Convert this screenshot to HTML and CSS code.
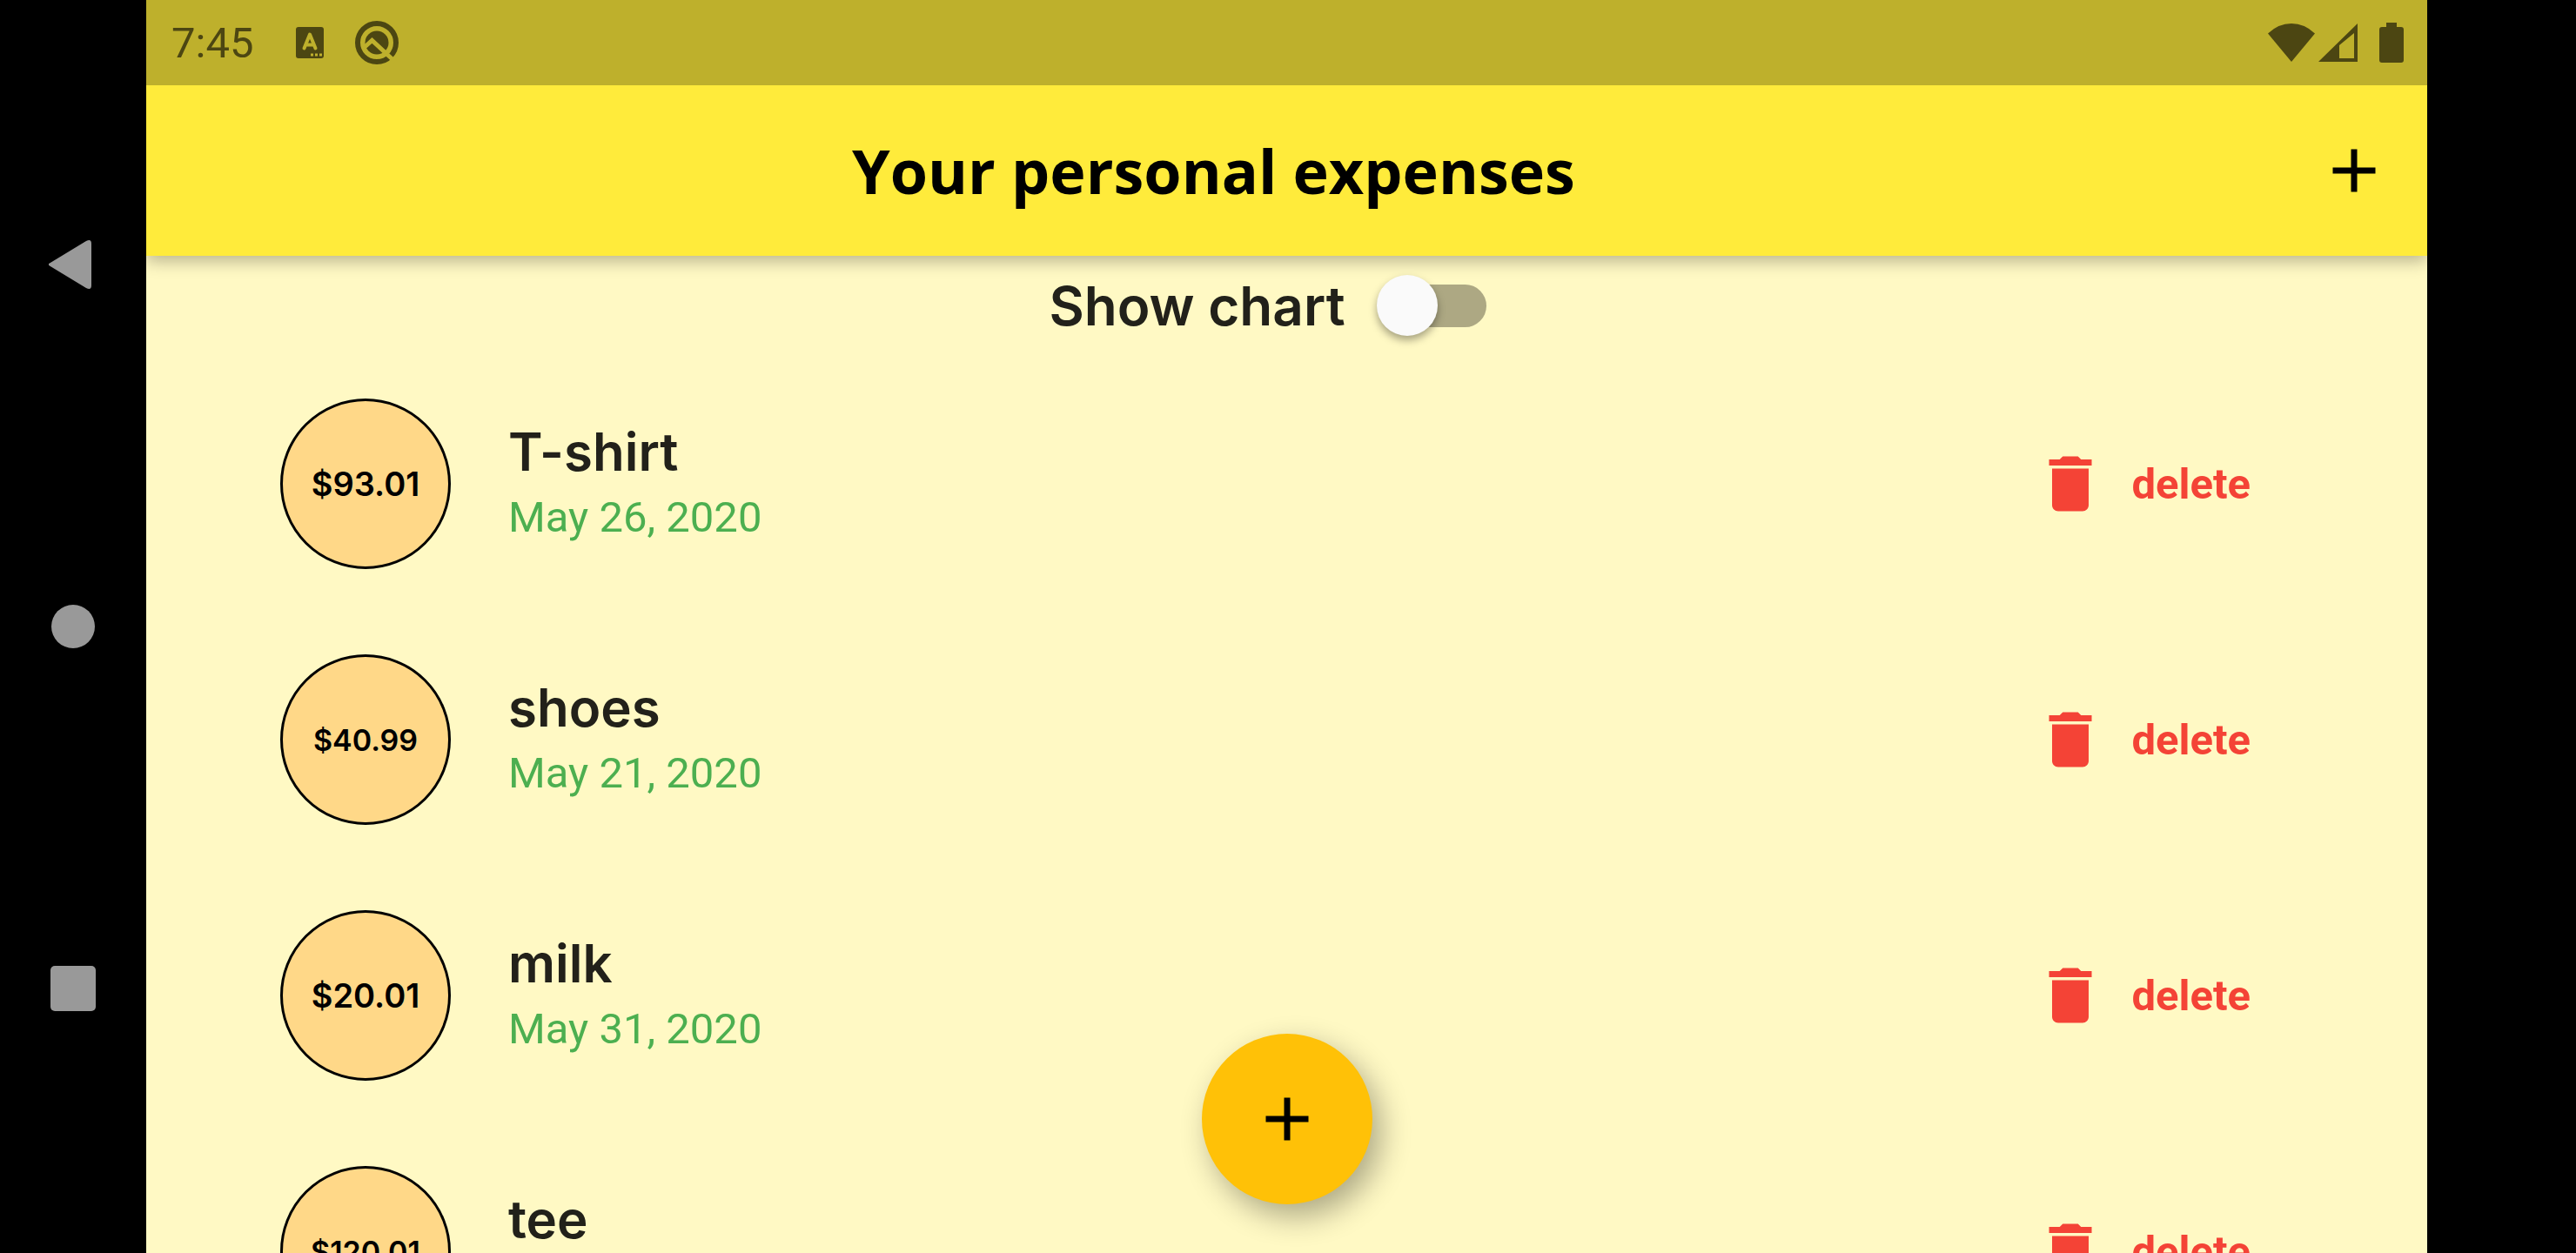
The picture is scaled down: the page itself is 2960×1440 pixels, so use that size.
FILE: index.html
```html
<!DOCTYPE html>
<html lang="en">
<head>
<meta charset="utf-8">
<title>Your personal expenses</title>
<link rel="stylesheet" href="styles.css">
</head>
<body>
<svg class="sprite" aria-hidden="true">
  <symbol id="add" viewBox="0 0 24 24"><path d="M19 13h-6v6h-2v-6H5v-2h6V5h2v6h6v2z"/></symbol>
  <symbol id="trash" viewBox="0 0 24 24"><path d="M6 19c0 1.100.9 2 2 2h8c1.100 0 2-.9 2-2V7H6v12zM19 4h-3.500l-1-1h-5l-1 1H5v2h14V4z"/></symbol>
</svg>
<div class="device">
  <nav class="system-nav" aria-label="System">
    <button type="button" aria-label="Back"><svg width="56" height="56" viewBox="0 0 56 56"><path d="M1 26.500 43 1q6-3 6 3v48q0 6-6 3L1 29.500q-3-1.500 0-3z"/></svg></button>
    <button type="button" aria-label="Home"><svg width="56" height="56" viewBox="0 0 56 56"><circle cx="28" cy="28" r="25"/></svg></button>
    <button type="button" aria-label="Recent apps"><svg width="56" height="56" viewBox="0 0 56 56"><rect x="2" y="2" width="52" height="52" rx="5"/></svg></button>
  </nav>
  <div class="app">
    <div class="status-bar">
      <span class="clock">7:45</span>
      <svg class="keyboard" width="34" height="38" viewBox="0 0 34 38"><rect x="1" y="1" width="32" height="36" rx="3"/><path class="cut" d="m10.500 25.500 6.500-16 6.500 16M12.500 21.500h9"/><path class="dots" d="M18 31.500h3v3h-3zM23 31.500h3v3h-3zM28 31.500h3v3h-3z"/></svg>
      <svg width="50" height="50" viewBox="0 0 50 50"><circle class="ring" cx="25" cy="25" r="22"/><circle cx="25" cy="25" r="13.500"/><path class="needle" d="m10 31 9.500-8.500L46 47"/></svg>
      <div class="signals">
        <svg width="54" height="46" viewBox="0 0 54 46"><path d="M0 12.500Q12 1 27 1t27 11.500L27 45z"/></svg>
        <svg width="46" height="46" viewBox="0 0 46 46"><path fill-rule="evenodd" d="M0 45 45 1v44zM24 26v15h17V12z"/></svg>
        <svg class="battery" width="28" height="46" viewBox="0 0 28 46"><path d="M8 0h12v5h5q3 0 3 3v35q0 3-3 3H3q-3 0-3-3V8q0-3 3-3h5z"/></svg>
      </div>
    </div>
    <header class="app-bar">
      <h1>Your personal expenses</h1>
      <button class="add" type="button" aria-label="Add expense"><svg class="icon"><use href="#add"/></svg></button>
    </header>
    <main>
      <div class="chart-toggle">
        <label for="chart">Show chart</label>
        <input id="chart" type="checkbox" role="switch">
      </div>
      <ul class="expenses">
        <li><span class="price">$93.01</span><div class="details"><h2>T-shirt</h2><time datetime="2020-05-26">May 26, 2020</time></div><button class="delete" type="button"><svg class="icon"><use href="#trash"/></svg>delete</button></li>
        <li><span class="price price-wide">$40.99</span><div class="details"><h2>shoes</h2><time datetime="2020-05-21">May 21, 2020</time></div><button class="delete" type="button"><svg class="icon"><use href="#trash"/></svg>delete</button></li>
        <li><span class="price">$20.01</span><div class="details"><h2>milk</h2><time datetime="2020-05-31">May 31, 2020</time></div><button class="delete" type="button"><svg class="icon"><use href="#trash"/></svg>delete</button></li>
        <li><span class="price price-wide">$120.01</span><div class="details"><h2>tee</h2></div><button class="delete" type="button"><svg class="icon"><use href="#trash"/></svg>delete</button></li>
      </ul>
    </main>
    <button class="fab" type="button" aria-label="Add expense"><svg class="icon"><use href="#add"/></svg></button>
  </div>
</div>
</body>
</html>
```

FILE: styles.css
```css
* { box-sizing: border-box; }
body { margin: 0; background: #000; font-family: Roboto, sans-serif; }
button { padding: 0; border: 0; background: none; font: inherit; color: inherit; cursor: pointer; }
svg { display: block; flex: none; fill: currentColor; }
.sprite { position: absolute; width: 0; height: 0; }
.icon { width: 84px; height: 84px; }

.device { display: flex; height: 100vh; padding-right: 171px; overflow: hidden; }
.system-nav { flex: none; width: 168px; padding: 276px 0; display: flex; flex-direction: column; align-items: center; justify-content: space-between; color: #999; }
.app { position: relative; flex: 1; min-width: 0; display: flex; flex-direction: column; background: #fff9c4; }

.status-bar { position: relative; z-index: 1; flex: none; height: 98px; padding: 0 27px 0 29px; display: flex; align-items: center; background: #beb02c; color: #4c4612; font-size: 49px; }
.clock { width: 142px; }
.keyboard { margin-right: 35px; }
.cut { fill: none; stroke: #beb02c; stroke-width: 4; stroke-linecap: round; stroke-linejoin: round; }
.dots { fill: #beb02c; }
.ring { fill: none; stroke: currentColor; stroke-width: 6; }
.needle { fill: none; stroke: #beb02c; stroke-width: 5; }
.signals { margin-left: auto; display: flex; gap: 4px; }
.battery { margin-left: 20px; }

.app-bar { position: relative; flex: none; height: 196px; display: flex; align-items: center; background: #ffeb3b; box-shadow: 0 6px 18px rgba(0, 0, 0, 0.28); }
h1 { flex: 1; margin: 0; text-align: center; font: bold 70px "Open Sans", sans-serif; }
.add { width: 168px; height: 168px; display: grid; place-items: center; }

main { flex: 1; min-height: 0; overflow: hidden; }
.chart-toggle { height: 115px; display: flex; align-items: center; justify-content: center; gap: 46px; padding-right: 44px; color: #22211a; font: 600 62px Inter, sans-serif; }
.chart-toggle input { appearance: none; position: relative; width: 116px; height: 49px; margin: 0; border-radius: 25px; background: #ada883; }
.chart-toggle input::before { content: ""; position: absolute; left: -10px; top: -11px; width: 70px; height: 70px; border-radius: 50%; background: #fafafa; box-shadow: 0 5px 10px rgba(0, 0, 0, 0.35); }
.chart-toggle input:checked::before { left: 56px; }

.expenses { margin: 0; padding: 0; list-style: none; }
.expenses li { height: 294px; padding: 0 203px 0 154px; display: flex; align-items: center; }
.price { flex: none; width: 196px; height: 196px; display: grid; place-items: center; border: 3px solid #000; border-radius: 50%; background: #ffd888; font: 600 38px Inter, sans-serif; }
.price-wide { font-size: 34px; }
.details { flex: 1; height: 150px; margin-left: 66px; }
h2 { margin: 0; color: #22211a; font: 600 60px/76px Inter, sans-serif; }
time { display: block; color: #4caf50; font-size: 49px; line-height: 76px; }
.delete { display: flex; align-items: center; gap: 28px; color: #f44336; font-size: 49px; font-weight: 700; }

.fab { position: absolute; left: 50%; bottom: 56px; width: 196px; height: 196px; margin-left: -98px; display: grid; place-items: center; border-radius: 50%; background: #ffc107; box-shadow: 10px 14px 34px rgba(0, 0, 0, 0.32); }
```
